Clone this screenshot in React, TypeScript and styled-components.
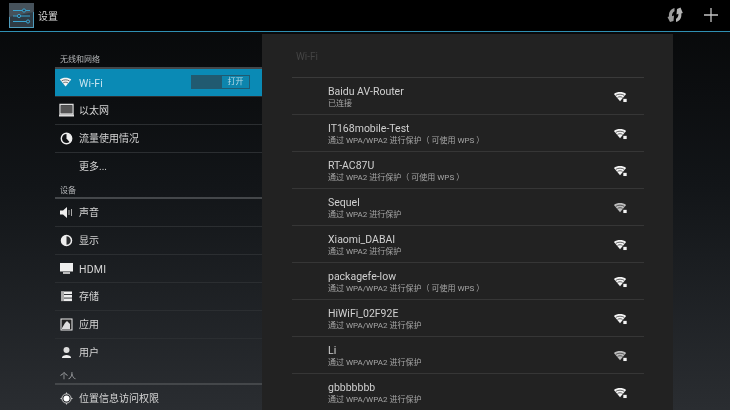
import React from "react";
import styled, { createGlobalStyle } from "styled-components";

const Global = createGlobalStyle`
  html, body { margin: 0; padding: 0; width: 730px; height: 410px; overflow: hidden; background: #000; }
  * { box-sizing: border-box; }
  body { font-family: Roboto, "Noto Sans CJK SC", sans-serif; }
`;

const Screen = styled.div`
  width: 730px;
  height: 410px;
  display: flex;
  flex-direction: column;
  overflow: hidden;
  filter: blur(0.3px);
  background: linear-gradient(180deg, #060708 0%, #121518 45%, #2a2d31 100%);
`;
const ActionBar = styled.header`
  height: 32px;
  flex: none;
  display: flex;
  align-items: center;
  padding: 0 11px 1px 9px;
  background: #000;
  border-bottom: 1px solid #2f8fb2;
`;
const AppIcon = styled.svg`
  width: 25px;
  height: 25px;
  flex: none;
`;
const AppTitle = styled.h1`
  margin: 0 0 0 4px;
  font-size: 10px;
  font-weight: 400;
  color: #d8d8d8;
  flex: 1;
`;
const ActionIcon = styled.svg<{ $gap?: number }>`
  width: 16px;
  height: 16px;
  flex: none;
  margin-left: ${(p) => p.$gap ?? 0}px;
`;
const Body = styled.main`
  flex: 1;
  min-height: 0;
  display: flex;
  align-items: flex-start;
  padding-left: 55px;
`;
const Nav = styled.nav`
  width: 207px;
  flex: none;
  padding-top: 19px;
`;
const SectionHead = styled.div<{ $first?: boolean }>`
  height: 18px;
  display: flex;
  align-items: center;
  font-size: 8px;
  color: #b4b6b8;
  padding: ${(p) => (p.$first ? "0 0 1px 5px" : "1px 0 0 5px")};
  border-bottom: 2px solid #44474a;
`;
const NavRow = styled.div<{ $active?: boolean; $last?: boolean }>`
  height: 28px;
  display: flex;
  align-items: center;
  padding: 0 12px 1px 2px;
  color: ${(p) => (p.$active ? "#c8e4ef" : "#d4d4d4")};
  background: ${(p) => (p.$active ? "#0a8ab5" : "transparent")};
  border-bottom: 1px solid ${(p) => (p.$last ? "transparent" : "#2b2e31")};
`;
const NavIconBox = styled.span`
  width: 18px;
  height: 16px;
  margin-right: 4px;
  flex: none;
  display: flex;
  align-items: center;
  justify-content: center;
`;
const NavLabel = styled.span<{ $latin?: boolean }>`
  flex: 1;
  font-size: ${(p) => (p.$latin ? 10.5 : 10)}px;
  letter-spacing: ${(p) => (p.$latin ? 0.2 : 0)}px;
  padding: ${(p) => (p.$latin ? "2px 0 0" : "0 0 2px")};
`;
const Toggle = styled.div`
  width: 59px;
  height: 14px;
  display: flex;
  background: #215a70;
  padding: 1px;
`;
const ToggleThumb = styled.div`
  margin-left: 30px;
  flex: 1;
  background: #0d85ad;
  color: #b9dbe7;
  font-size: 8px;
  line-height: 12px;
  text-align: center;
`;
const Panel = styled.section`
  width: 411px;
  flex: none;
  height: 376px;
  margin-top: 2px;
  background: #222222;
  padding: 0 29px 0 30px;
  overflow: hidden;
`;
const PanelTitle = styled.div`
  height: 44px;
  padding: 17px 0 0 4px;
  font-size: 10px;
  color: #444;
  border-bottom: 1px solid #3a3a3a;
`;
const Network = styled.div`
  height: 37px;
  display: flex;
  align-items: center;
  padding: 0 16px 0 36px;
  border-bottom: 1px solid #363636;
`;
const NetworkText = styled.div`
  flex: 1;
  padding-top: 1px;
`;
const NetworkName = styled.div`
  font-size: 10.5px;
  line-height: 13px;
  color: #d0d0d0;
`;
const NetworkStatus = styled.div`
  font-size: 8px;
  line-height: 11px;
  color: #a6a6a6;
`;

const WifiIcon = ({ lock = true, dim = false, size = 15 }: { lock?: boolean; dim?: boolean; size?: number }) => (
  <svg width={size} height={size} viewBox="0 0 16 16">
    <path d="M1 5.2C4.5 2.4 10.5 2.4 14 5.2L7.5 13Z" fill={dim ? "#bdbdbd" : "#f4f4f4"} />
    <path d="M3 6.8C5.6 5.1 9.4 5.1 12 6.8" stroke="#333" strokeWidth="0.8" fill="none" />
    <path d="M4.8 9C6.4 8 8.6 8 10.2 9" stroke="#333" strokeWidth="0.8" fill="none" />
    {lock && <rect x="11" y="10.5" width="3.6" height="3.4" fill="#f4f4f4" />}
  </svg>
);
const Ico = ({ children }: { children: React.ReactNode }) => (
  <NavIconBox>
    <svg width="17" height="15" viewBox="0 0 17 15">{children}</svg>
  </NavIconBox>
);

const networks = [
  ["Baidu AV-Router", "已连接", false],
  ["IT168mobile-Test", "通过 WPA/WPA2 进行保护（ 可使用 WPS ）", false],
  ["RT-AC87U", "通过 WPA2 进行保护（ 可使用 WPS ）", false],
  ["Sequel", "通过 WPA2 进行保护", true],
  ["Xiaomi_DABAI", "通过 WPA2 进行保护", false],
  ["packagefe-low", "通过 WPA/WPA2 进行保护（ 可使用 WPS ）", false],
  ["HiWiFi_02F92E", "通过 WPA/WPA2 进行保护", false],
  ["Li", "通过 WPA/WPA2 进行保护", true],
  ["gbbbbbbb", "通过 WPA/WPA2 进行保护", false],
] as const;

export default function App() {
  return (
    <Screen>
      <Global />
      <ActionBar>
        <AppIcon viewBox="0 0 25 25">
          <rect x="0.5" y="0.5" width="24" height="24" fill="#2f3b44" stroke="#4f9cbc" />
          <path d="M0 0H25V9L0 14Z" fill="#46525b" />
          <g stroke="#39a5d2" strokeWidth="1" fill="none">
            <path d="M4 7.5H21M4 13H21M4 18.5H21" />
            <circle cx="15" cy="7.5" r="1.6" fill="#2f3b44" />
            <circle cx="10" cy="13" r="1.6" fill="#2f3b44" />
            <circle cx="19" cy="18.5" r="1.6" fill="#2f3b44" />
          </g>
        </AppIcon>
        <AppTitle>设置</AppTitle>
        <ActionIcon viewBox="0 0 16 16">
          <path d="M7.5 1C3.5 2 1.5 5.5 2 9.5L0.5 10L3 15L6.5 14L7 8.5L5 9.3C4.8 7 5.8 5 7.5 4.2Z" fill="#9a9a9a" />
          <path d="M9 15C13 14 14.8 10.5 14.3 6.5L15.8 6L13.5 0.5L10 2L9.5 7.5L11.4 6.7C11.6 9 10.6 11 9 11.8Z" fill="#b4b4b4" />
        </ActionIcon>
        <ActionIcon $gap={20} viewBox="0 0 16 16">
          <path d="M8 1V15M1 8H15" stroke="#c4c4c4" strokeWidth="1.3" />
        </ActionIcon>
      </ActionBar>
      <Body>
        <Nav>
          <SectionHead $first>无线和网络</SectionHead>
          <NavRow $active>
            <NavIconBox><WifiIcon lock={false} size={14} /></NavIconBox>
            <NavLabel $latin>Wi-Fi</NavLabel>
            <Toggle><ToggleThumb>打开</ToggleThumb></Toggle>
          </NavRow>
          <NavRow>
            <Ico><path d="M2 1.5H15V11H2Z" fill="none" stroke="#ddd" strokeWidth="1.3" /><rect x="3" y="2.5" width="11" height="7.5" fill="#555" /><rect x="1" y="11.5" width="15" height="2" fill="#ddd" /></Ico>
            <NavLabel>以太网</NavLabel>
          </NavRow>
          <NavRow>
            <Ico><circle cx="8.5" cy="7.5" r="5.2" fill="none" stroke="#eee" strokeWidth="1.4" /><path d="M8.5 2.5V7.5L12 11.5A5.2 5.2 0 0 0 8.5 2.5Z" fill="#eee" /></Ico>
            <NavLabel>流量使用情况</NavLabel>
          </NavRow>
          <NavRow $last>
            <NavIconBox />
            <NavLabel>更多...</NavLabel>
          </NavRow>
          <SectionHead>设备</SectionHead>
          <NavRow>
            <Ico><path d="M2 5.5H5L9 2V13L5 9.5H2Z" fill="#eee" /><path d="M11 5V10M13.5 4V11" stroke="#aaa" strokeWidth="1" /></Ico>
            <NavLabel>声音</NavLabel>
          </NavRow>
          <NavRow>
            <Ico><circle cx="8.5" cy="7.5" r="5" fill="#2a2c2e" stroke="#eee" strokeWidth="1.5" /><path d="M8.5 2.5A5 5 0 0 0 8.5 12.5Z" fill="#eee" /></Ico>
            <NavLabel>显示</NavLabel>
          </NavRow>
          <NavRow>
            <Ico><rect x="2" y="2" width="13" height="8.5" fill="#eee" /><rect x="5" y="11" width="7" height="2" fill="#bbb" /></Ico>
            <NavLabel $latin>HDMI</NavLabel>
          </NavRow>
          <NavRow>
            <Ico><rect x="3" y="2.5" width="11" height="2.6" fill="#eee" /><rect x="3" y="6" width="11" height="2.6" fill="#eee" /><rect x="3" y="9.5" width="11" height="2.6" fill="#eee" /><path d="M3 2.5H6V12H3Z" fill="#aaa" /></Ico>
            <NavLabel>存储</NavLabel>
          </NavRow>
          <NavRow>
            <Ico><rect x="3" y="2" width="11" height="11" fill="#222" stroke="#eee" strokeWidth="1" /><path d="M4 11L7 6L9 4L12 7V12H4Z" fill="#ddd" /></Ico>
            <NavLabel>应用</NavLabel>
          </NavRow>
          <NavRow $last>
            <Ico><circle cx="8.5" cy="5" r="3" fill="#ddd" /><path d="M4 12.5C4 9 13 9 13 12.5V13H4Z" fill="#eee" /></Ico>
            <NavLabel>用户</NavLabel>
          </NavRow>
          <SectionHead>个人</SectionHead>
          <NavRow $last>
            <Ico><circle cx="8.5" cy="7.5" r="3" fill="#fff" /><circle cx="8.5" cy="7.5" r="4.6" fill="none" stroke="#ccc" strokeWidth="1" /><path d="M8.5 1.5V3M8.5 12V13.5M2.5 7.5H4M13 7.5H14.5" stroke="#ccc" strokeWidth="1" /></Ico>
            <NavLabel>位置信息访问权限</NavLabel>
          </NavRow>
        </Nav>
        <Panel>
          <PanelTitle>Wi-Fi</PanelTitle>
          {networks.map(([name, status, dim]) => (
            <Network key={name}>
              <NetworkText>
                <NetworkName>{name}</NetworkName>
                <NetworkStatus>{status}</NetworkStatus>
              </NetworkText>
              <WifiIcon dim={dim} />
            </Network>
          ))}
        </Panel>
      </Body>
    </Screen>
  );
}
